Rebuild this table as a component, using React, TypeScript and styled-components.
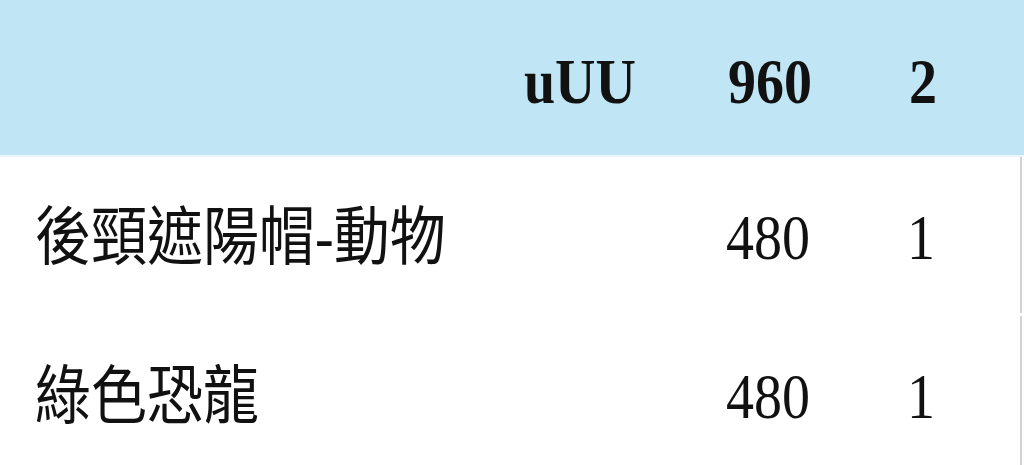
import styled, { createGlobalStyle } from 'styled-components';

const GlobalStyle = createGlobalStyle`
  html, body {
    margin: 0;
    padding: 0;
    background: #ffffff;
  }
  body {
    font-family: 'Liberation Serif', 'Noto Sans CJK TC', serif;
    color: #111;
  }
`;

const Table = styled.div`
  width: 1024px;
  height: 465px;
  overflow: hidden;
  display: flex;
  flex-direction: column;
`;

const Row = styled.div<{ $head?: boolean }>`
  display: grid;
  grid-template-columns: 1fr 150px 176px 125px;
  align-items: center;
  box-sizing: border-box;
  padding: ${({ $head }) => ($head ? '8px 87px 0 35px' : '6px 85px 0 35px')};
  height: ${({ $head }) => ($head ? '157px' : '156px')};
  flex-shrink: 0;
  background: ${({ $head }) => ($head ? '#c0e6f5' : '#ffffff')};
  border-bottom: ${({ $head }) => ($head ? '2px solid #eaf6fb' : 'none')};
  border-right: ${({ $head }) => ($head ? 'none' : '2px solid #d2d2d2')};
  margin-right: ${({ $head }) => ($head ? '0' : '2px')};
  margin-bottom: ${({ $head }) => ($head ? '0' : '3px')};
  font-weight: ${({ $head }) => ($head ? 700 : 400)};
  font-size: 56px;
`;

const Cell = styled.div<{ $align?: 'left' | 'right' }>`
  text-align: ${({ $align }) => $align ?? 'right'};
  white-space: nowrap;
  line-height: 1;
`;

const NameCell = styled(Cell)`
  grid-column: 1 / span 2;
`;

const Text = styled.span`
  display: inline-block;
  transform: scaleY(1.13);
`;

const items = [
  { name: '後頸遮陽帽-動物', price: 480, qty: 1 },
  { name: '綠色恐龍', price: 480, qty: 1 },
];

const App = () => (
  <>
    <GlobalStyle />
    <Table>
      <Row $head>
        <Cell />
        <Cell><Text>uUU</Text></Cell>
        <Cell><Text>960</Text></Cell>
        <Cell><Text>2</Text></Cell>
      </Row>
      {items.map((item) => (
        <Row key={item.name}>
          <NameCell $align="left"><Text>{item.name}</Text></NameCell>
          <Cell><Text>{item.price}</Text></Cell>
          <Cell><Text>{item.qty}</Text></Cell>
        </Row>
      ))}
    </Table>
  </>
);

export default App;
